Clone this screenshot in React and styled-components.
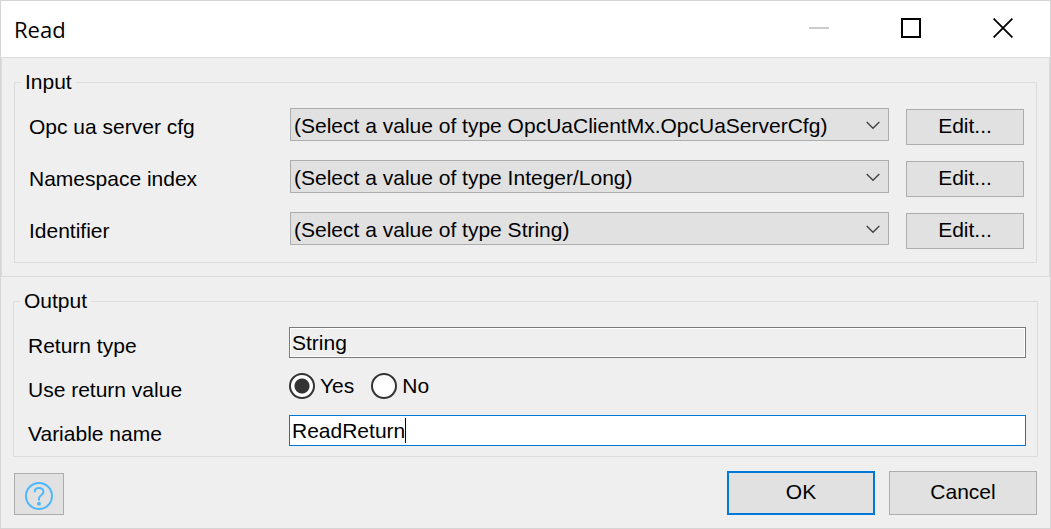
import React, { useState } from "react";
import styled, { createGlobalStyle } from "styled-components";

const GlobalStyle = createGlobalStyle`
  *, *::before, *::after { box-sizing: border-box; }
  body {
    margin: 0;
    background: #efefef;
    color: #000;
    font: 21px/24px "Liberation Sans", Arial, sans-serif;
  }
  button, input, select { font: inherit; color: inherit; }
`;

const Dialog = styled.main`
  display: flex;
  flex-direction: column;
  min-height: 100vh;
  border: 1px solid #d5d5d5;
  background: #efefef;
`;

const TitleBar = styled.header`
  display: flex;
  justify-content: space-between;
  height: 56px;
  padding: 0 1px 0 13px;
  background: #fff;
`;

const Title = styled.h1`
  margin: 0;
  font: 400 22px/56px "Open Sans", "Noto Sans", sans-serif;
`;

const WindowControls = styled.div`
  display: flex;
  height: 54px;
`;

const ControlButton = styled.button`
  display: flex;
  align-items: center;
  justify-content: center;
  width: 92px;
  padding: 0;
  border: 0;
  background: none;
`;

const InputSection = styled.section`
  padding: 12px 12px 13px;
  border: 1px solid #dcdcdc;
`;

const OutputSection = styled.section`
  padding: 12px 12px 0;
`;

const Group = styled.fieldset`
  min-width: 0;
  margin: 0;
  padding: 0 12px 13px 14px;
  border: 1px solid #dcdcdc;
`;

const OutputGroup = styled(Group)`
  padding: 0 11px 10px 14px;
`;

const Legend = styled.legend`
  margin-left: -8px;
  padding: 0 4px;
`;

const Rows = styled.div`
  display: flex;
  flex-direction: column;
  gap: ${(p) => p.$gap}px;
  padding-top: 14px;
`;

const Row = styled.div`
  display: flex;
  align-items: flex-start;
  min-height: ${(p) => p.$height}px;
`;

const Caption = styled.label`
  flex: 0 0 261px;
  padding-top: 7px;
`;

const SelectBox = styled.div`
  position: relative;
  flex: 1;
  min-width: 0;
  margin-right: 17px;
`;

const Select = styled.select`
  display: block;
  width: 100%;
  height: 33px;
  padding: 2px 36px 0 3px;
  appearance: none;
  border: 1px solid #adadad;
  border-radius: 0;
  background: #e1e1e1;
`;

const Chevron = styled.svg`
  position: absolute;
  top: 13px;
  right: 9px;
  pointer-events: none;
`;

const Button = styled.button`
  width: ${(p) => p.$width}px;
  height: ${(p) => p.$height}px;
  padding: 0 0 2px;
  border: ${(p) => (p.$primary ? "2px solid #0078d7" : "1px solid #adadad")};
  background: #e1e1e1;
`;

const EditButton = styled(Button)`
  align-self: flex-end;
`;

const HelpButton = styled(Button)`
  display: flex;
  align-items: center;
  justify-content: center;
  margin-right: auto;
  padding: 3px 0 0;
`;

const TextField = styled.div`
  display: flex;
  align-items: center;
  flex: 1;
  min-width: 0;
  height: 31px;
  padding: 0 2px;
  border: 1px solid ${(p) => (p.$active ? "#0078d7" : "#7a7a7a")};
  background: ${(p) => (p.$active ? "#fff" : "#efefef")};
  box-shadow: inset 0 0 0 1px #fff;
`;

const TextInput = styled.input`
  min-width: 0;
  height: 24px;
  padding: 0;
  border: 0;
  outline: 0;
  background: none;
  caret-color: transparent;
  field-sizing: content;
`;

const Caret = styled.span`
  width: 1px;
  height: 25px;
  background: #000;
`;

const RadioGroup = styled.div`
  display: flex;
  align-items: center;
  gap: 17px;
  height: 30px;
`;

const RadioLabel = styled.label`
  display: flex;
  align-items: center;
  gap: 5px;
`;

const Radio = styled.input`
  width: 26px;
  height: 26px;
  margin: 0;
  appearance: none;
  border: 2px solid #333;
  border-radius: 50%;
  background: #fff;
  &:checked {
    background: radial-gradient(circle, #333 0 7px, #fff 8px);
  }
`;

const Footer = styled.footer`
  display: flex;
  align-items: flex-end;
  gap: 14px;
  padding: 14px 13px 13px;
`;

const PARAMETERS = [
  { id: "server", label: "Opc ua server cfg", value: "(Select a value of type OpcUaClientMx.OpcUaServerCfg)" },
  { id: "namespace", label: "Namespace index", value: "(Select a value of type Integer/Long)" },
  { id: "identifier", label: "Identifier", value: "(Select a value of type String)" },
];

function ParameterRow({ id, label, value }) {
  return (
    <Row $height={37}>
      <Caption htmlFor={id}>{label}</Caption>
      <SelectBox>
        <Select id={id}>
          <option>{value}</option>
        </Select>
        <Chevron width="14" height="9" viewBox="0 0 14 9" fill="none" stroke="#444" strokeWidth="1.4" aria-hidden="true">
          <path d="M.7 1 7 7.3 13.3 1" />
        </Chevron>
      </SelectBox>
      <EditButton type="button" $width={118} $height={36}>Edit...</EditButton>
    </Row>
  );
}

export default function App() {
  const [useReturn, setUseReturn] = useState("yes");
  const [name, setName] = useState("ReadReturn");

  return (
    <>
      <GlobalStyle />
      <Dialog>
        <TitleBar>
          <Title>Read</Title>
          <WindowControls>
            <ControlButton type="button" aria-label="Minimize" disabled>
              <svg width="20" height="20" viewBox="0 0 20 20">
                <path d="M0 10h20" stroke="#ccc" strokeWidth="2" />
              </svg>
            </ControlButton>
            <ControlButton type="button" aria-label="Maximize">
              <svg width="20" height="20" viewBox="0 0 20 20">
                <path d="M1 1h18v18H1z" fill="none" stroke="#000" strokeWidth="2" />
              </svg>
            </ControlButton>
            <ControlButton type="button" aria-label="Close">
              <svg width="20" height="20" viewBox="0 0 20 20">
                <path d="M.6.6l18.8 18.8M19.4.6.6 19.4" stroke="#000" strokeWidth="1.8" />
              </svg>
            </ControlButton>
          </WindowControls>
        </TitleBar>

        <InputSection>
          <Group>
            <Legend>Input</Legend>
            <Rows $gap={15}>
              {PARAMETERS.map((p) => (
                <ParameterRow key={p.id} {...p} />
              ))}
            </Rows>
          </Group>
        </InputSection>

        <OutputSection>
          <OutputGroup>
            <Legend>Output</Legend>
            <Rows $gap={13}>
              <Row $height={31}>
                <Caption htmlFor="type">Return type</Caption>
                <TextField>
                  <TextInput id="type" value="String" readOnly />
                </TextField>
              </Row>
              <Row $height={31}>
                <Caption as="span" id="use-return">Use return value</Caption>
                <RadioGroup role="radiogroup" aria-labelledby="use-return">
                  <RadioLabel>
                    <Radio type="radio" name="use" checked={useReturn === "yes"} onChange={() => setUseReturn("yes")} />
                    Yes
                  </RadioLabel>
                  <RadioLabel>
                    <Radio type="radio" name="use" checked={useReturn === "no"} onChange={() => setUseReturn("no")} />
                    No
                  </RadioLabel>
                </RadioGroup>
              </Row>
              <Row $height={31}>
                <Caption htmlFor="variable">Variable name</Caption>
                <TextField $active>
                  <TextInput id="variable" value={name} onChange={(e) => setName(e.target.value)} />
                  <Caret />
                </TextField>
              </Row>
            </Rows>
          </OutputGroup>
        </OutputSection>

        <Footer>
          <HelpButton type="button" aria-label="Help" $width={50} $height={42}>
            <svg width="28" height="28" viewBox="0 0 28 28" fill="none" stroke="#4db8ff">
              <circle cx="14" cy="14" r="13" strokeWidth="2" />
              <path d="M9.7 10.2V9.8C9.7 7.5 11.5 6 14 6s4.5 1.6 4.5 3.9c0 3.3-4.5 3.3-4.5 6.4v2.2" strokeWidth="2" />
              <circle cx="14" cy="21.8" r="2" fill="#4db8ff" stroke="none" />
            </svg>
          </HelpButton>
          <Button type="button" $width={148} $height={44} $primary>OK</Button>
          <Button type="button" $width={148} $height={44}>Cancel</Button>
        </Footer>
      </Dialog>
    </>
  );
}
